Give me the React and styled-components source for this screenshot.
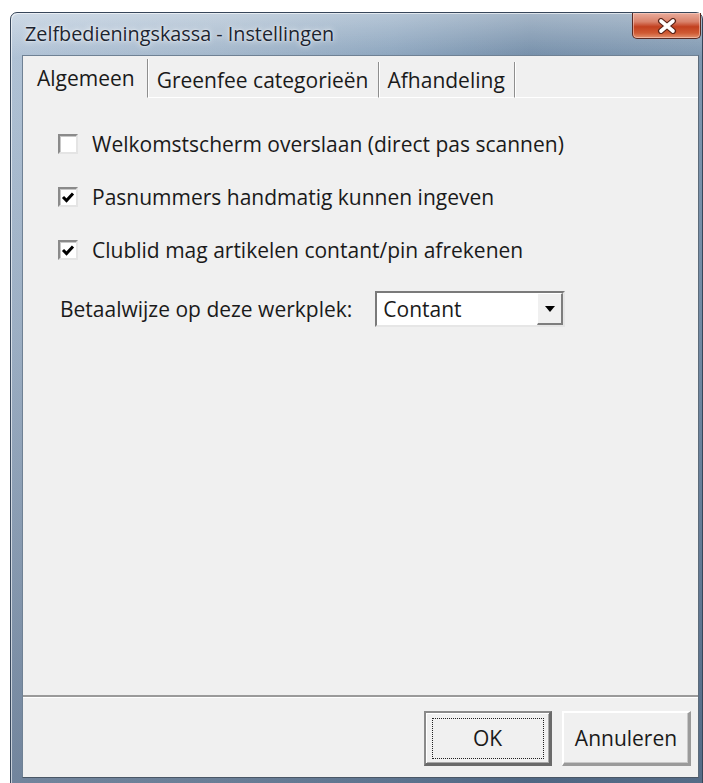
import React from "react";
import styled, { createGlobalStyle } from "styled-components";

const Global = createGlobalStyle`
  html, body { margin: 0; padding: 0; background: #ffffff; }
  body { font-family: "Open Sans", "Noto Sans", sans-serif; }
`;

const Page = styled.div`
  width: 703px;
  height: 783px;
  overflow: hidden;
  padding: 12px 0 0 10px;
  box-sizing: border-box;
`;

const Window = styled.div`
  width: 693px;
  height: 790px;
  box-sizing: border-box;
  border-radius: 7px 7px 0 0;
  border: 1px solid #37465a;
  padding: 0 3px 0 11px;
  background:
    linear-gradient(180deg, rgba(255,255,255,0.35) 0%, rgba(255,255,255,0) 45px),
    linear-gradient(180deg, rgba(30,50,80,0) 0%, rgba(30,50,80,0.15) 40%, rgba(30,50,80,0.45) 100%),
    linear-gradient(90deg, #b3c5d8 0%, #a5b9cd 30%, #8ea7c0 55%, #7690ab 75%, #8099b2 100%);
  display: flex;
  flex-direction: column;
  box-shadow: inset 1px 1px 0 rgba(255,255,255,0.6);
`;

const TitleBar = styled.div`
  height: 42px;
  display: flex;
  align-items: flex-start;
  justify-content: space-between;
`;

const Title = styled.div`
  padding: 7px 0 0 3px;
  font-size: 19.8px;
  color: #1c2430;
  text-shadow: 0 0 6px rgba(255,255,255,0.9), 0 0 2px rgba(255,255,255,0.8);
`;

const CloseButton = styled.div`
  width: 69px;
  height: 26px;
  margin-right: -2px;
  box-sizing: border-box;
  border: 1px solid #5a2a22;
  border-top: none;
  border-radius: 0 0 5px 5px;
  background: linear-gradient(180deg, #e9ac9c 0%, #d9826b 35%, #c2401f 55%, #cf5a33 80%, #e2926f 100%);
  display: flex;
  align-items: center;
  justify-content: center;
  box-shadow: inset 0 0 0 1px rgba(255,220,210,0.5);
`;

const Client = styled.div`
  background: #f0f0f0;
  border-left: 1px solid #6f8194;
  border-top: 1px solid #6f8194;
  border-right: 1px solid #5c6b7a;
  border-bottom: 1px solid #4a5766;
  display: flex;
  flex-direction: column;
  height: 723px;
  flex: none;
  box-sizing: border-box;
`;

const TabStrip = styled.div`
  display: flex;
  align-items: flex-end;
  height: 42px;
  padding-left: 1px;
`;

const Tab = styled.div`
  height: ${p => (p.$active ? "39px" : "36px")};
  padding: ${p => (p.$active ? "0 12px 0 13px" : "0 9px 0 9px")};
  box-sizing: border-box;
  display: flex;
  align-items: center;
  font-size: 21px;
  color: #1a1a1a;
  border-right: 1px solid #8e8e8e;
  box-shadow: 1px 0 0 #ffffff;
  border-bottom: ${p => (p.$active ? "1px solid transparent" : "1px solid #ffffff")};
`;

const TabFill = styled.div`
  flex: 1;
  align-self: stretch;
  border-bottom: 1px solid #ffffff;
  margin-left: 1px;
`;

const Panel = styled.div`
  flex: 1;
  padding: 34px 0 0 35px;
  display: flex;
  flex-direction: column;
  gap: 29px;
`;

const CheckRow = styled.label`
  display: flex;
  align-items: center;
  gap: 14px;
  height: 24px;
  font-size: 21px;
  color: #1a1a1a;
`;

const Box = styled.span`
  width: 20px;
  height: 20px;
  flex: none;
  box-sizing: border-box;
  background: #ffffff;
  border-style: solid;
  border-width: 2px;
  border-color: #8a8a8a #e4e4e4 #e4e4e4 #8a8a8a;
  box-shadow: inset 1px 1px 0 #c8c8c8;
  display: flex;
  align-items: center;
  justify-content: center;
`;

const FieldRow = styled.div`
  display: flex;
  align-items: center;
  gap: 23px;
  padding-left: 2px;
  font-size: 21px;
  color: #1a1a1a;
`;

const Combo = styled.div`
  width: 190px;
  height: 36px;
  box-sizing: border-box;
  background: #ffffff;
  border-style: solid;
  border-width: 2px;
  border-color: #7a7a7a #e6e6e6 #e6e6e6 #7a7a7a;
  display: flex;
  align-items: stretch;
`;

const ComboText = styled.div`
  flex: 1;
  display: flex;
  align-items: center;
  padding-left: 6px;
  font-size: 21px;
  color: #1a1a1a;
`;

const ComboArrow = styled.div`
  width: 26px;
  box-sizing: border-box;
  background: #f0f0f0;
  border-style: solid;
  border-width: 1px 2px 2px 1px;
  border-color: #ffffff #7e7e7e #7e7e7e #ffffff;
  display: flex;
  align-items: center;
  justify-content: center;
`;

const Separator = styled.div`
  height: 2px;
  background: #9a9a9a;
  border-bottom: 1px solid #ffffff;
`;

const Footer = styled.div`
  height: 79px;
  box-sizing: border-box;
  display: flex;
  justify-content: flex-end;
  align-items: flex-start;
  gap: 10px;
  padding: 13px 7px 0 0;
`;

const Button = styled.div`
  width: ${p => p.$w}px;
  height: 55px;
  box-sizing: border-box;
  border-style: solid;
  border-width: 2px 3px 3px 2px;
  border-color: ${p => (p.$default ? "#8a8a8a #6a6a6a #6a6a6a #8a8a8a" : "#ffffff #9a9a9a #9a9a9a #ffffff")};
  background: #f0f0f0;
  box-shadow: ${p => (p.$default ? "inset 1px 1px 0 #ffffff, inset -1px -1px 0 #a8a8a8" : "inset -1px -1px 0 #c8c8c8")};
  display: flex;
  align-items: center;
  justify-content: center;
  position: relative;
  font-size: 21px;
  color: #1a1a1a;
`;

const FocusRing = styled.span`
  position: absolute;
  inset: 5px 5px 4px 6px;
  border: 1px dotted #202020;
`;

const Check = () => (
  <svg width="14" height="14" viewBox="0 0 14 14">
    <path d="M2 7 L5.5 10.5 L12 3.5" fill="none" stroke="#000" strokeWidth="3" />
  </svg>
);

const CloseGlyph = () => (
  <svg width="22" height="16" viewBox="0 0 22 16">
    <path d="M5 3 L17 13 M17 3 L5 13" stroke="#5a2418" strokeWidth="6" strokeLinecap="round" />
    <path d="M5 3 L17 13 M17 3 L5 13" stroke="#ffffff" strokeWidth="3.6" strokeLinecap="round" />
  </svg>
);

const options = [
  { label: "Welkomstscherm overslaan (direct pas scannen)", checked: false },
  { label: "Pasnummers handmatig kunnen ingeven", checked: true },
  { label: "Clublid mag artikelen contant/pin afrekenen", checked: true },
];

export default function App() {
  return (
    <>
      <Global />
      <Page>
        <Window>
          <TitleBar>
            <Title>Zelfbedieningskassa - Instellingen</Title>
            <CloseButton>
              <CloseGlyph />
            </CloseButton>
          </TitleBar>
          <Client>
            <TabStrip>
              <Tab $active>Algemeen</Tab>
              <Tab>Greenfee categorieën</Tab>
              <Tab>Afhandeling</Tab>
              <TabFill />
            </TabStrip>
            <Panel>
              {options.map(o => (
                <CheckRow key={o.label}>
                  <Box>{o.checked && <Check />}</Box>
                  {o.label}
                </CheckRow>
              ))}
              <FieldRow>
                Betaalwijze op deze werkplek:
                <Combo>
                  <ComboText>Contant</ComboText>
                  <ComboArrow>
                    <svg width="10" height="6" viewBox="0 0 10 6">
                      <path d="M0 0 H10 L5 6 Z" fill="#000" />
                    </svg>
                  </ComboArrow>
                </Combo>
              </FieldRow>
            </Panel>
            <Separator />
            <Footer>
              <Button $w={128} $default>
                <FocusRing />
                OK
              </Button>
              <Button $w={129}>Annuleren</Button>
            </Footer>
          </Client>
        </Window>
      </Page>
    </>
  );
}
